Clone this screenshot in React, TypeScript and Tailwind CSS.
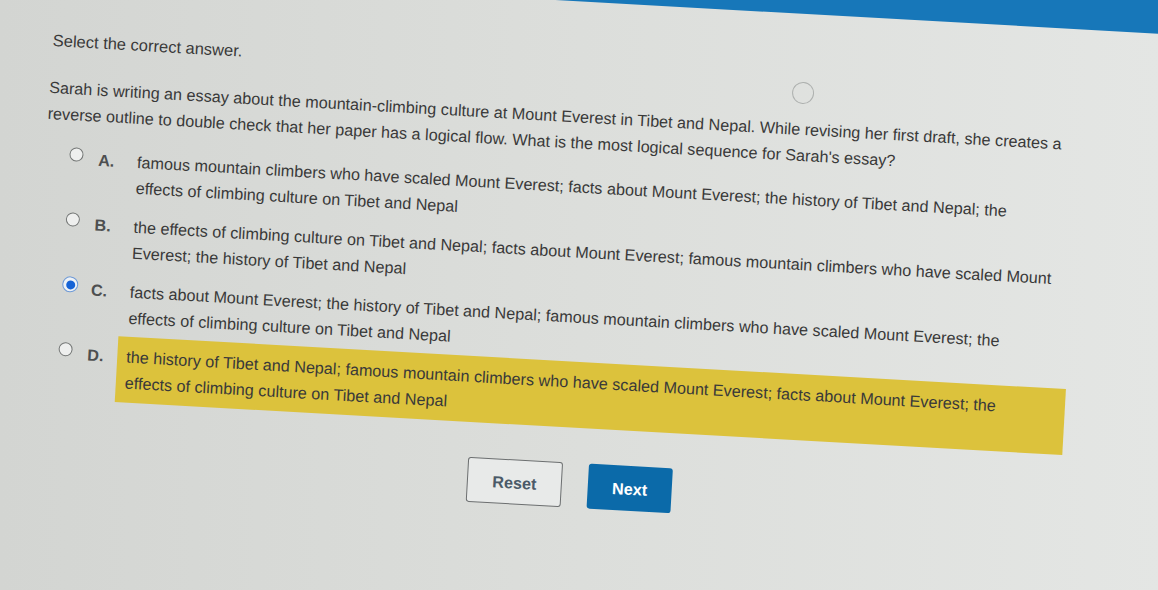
import type { ReactNode } from 'react';

type Option = {
  letter: string;
  lines: [string, string];
  selected?: boolean;
  highlight?: boolean;
};

const options: Option[] = [
  {
    letter: 'A.',
    lines: [
      'famous mountain climbers who have scaled Mount Everest; facts about Mount Everest; the history of Tibet and Nepal; the',
      'effects of climbing culture on Tibet and Nepal',
    ],
  },
  {
    letter: 'B.',
    lines: [
      'the effects of climbing culture on Tibet and Nepal; facts about Mount Everest; famous mountain climbers who have scaled Mount',
      'Everest; the history of Tibet and Nepal',
    ],
  },
  {
    letter: 'C.',
    lines: [
      'facts about Mount Everest; the history of Tibet and Nepal; famous mountain climbers who have scaled Mount Everest; the',
      'effects of climbing culture on Tibet and Nepal',
    ],
    selected: true,
  },
  {
    letter: 'D.',
    lines: [
      'the history of Tibet and Nepal; famous mountain climbers who have scaled Mount Everest; facts about Mount Everest; the',
      'effects of climbing culture on Tibet and Nepal',
    ],
    highlight: true,
  },
];

function Radio({ checked }: { checked?: boolean }) {
  if (checked) {
    return (
      <span className="mt-[1px] flex h-[16px] w-[16px] items-center justify-center rounded-full border-[1.5px] border-[#6f9ad6] bg-[#eef2f6]">
        <span className="h-[9px] w-[9px] rounded-full bg-[#1663d6]" />
      </span>
    );
  }
  return <span className="mt-[2px] h-[14px] w-[14px] rounded-full border-[1.5px] border-[#737675] bg-[#eeefee]" />;
}

function OptionRow({ opt }: { opt: Option }) {
  const body: ReactNode = (
    <>
      {opt.lines[0]}
      <br />
      {opt.lines[1]}
    </>
  );
  return (
    <div className="flex items-start pl-[78px]">
      <div className="flex w-[29px] justify-start">
        <Radio checked={opt.selected} />
      </div>
      <div className="w-[39px] font-bold text-[#4d4f50]">{opt.letter}</div>
      {opt.highlight ? (
        <div className="-ml-[9px] -mt-[7px] w-[949px] bg-[#dcc23c] pb-[7px] pl-[9px] pt-[7px]">{body}</div>
      ) : (
        <div>{body}</div>
      )}
    </div>
  );
}

export default function App() {
  return (
    <div className="relative h-[590px] w-[1158px] overflow-hidden bg-gradient-to-r from-[#d3d5d2] via-[#dcdedb] to-[#e4e6e4] font-['Liberation_Sans',Arial,sans-serif] text-[16.2px] leading-[26px] text-[#393939]">
      {/* the photo is tilted a little, so the whole page is turned to match */}
      <div className="-ml-[100px] -mt-[80px] h-[800px] w-[1400px] origin-[100px_80px] rotate-[3.2deg]">
        <div className="h-[49px] w-full bg-[#1777b9]" />
        <div className="relative pl-[100px] pt-[57px]">
          <div className="pl-[55px] text-[16.5px] leading-[22px]">Select the correct answer.</div>

          <span className="absolute left-[896px] top-[68px] h-[22px] w-[22px] rounded-full border border-[#aeb1af]" />

          <div className="mt-[23px] pl-[54px]">
            Sarah is writing an essay about the mountain-climbing culture at Mount Everest in Tibet and Nepal. While revising her first draft, she creates a
            <br />
            reverse outline to double check that her paper has a logical flow. What is the most logical sequence for Sarah&apos;s essay?
          </div>

          <div className="mt-[18px] flex flex-col gap-[13px]">
            {options.map((o) => (
              <OptionRow key={o.letter} opt={o} />
            ))}
          </div>

          <div className="mt-[35px] flex items-start gap-[26px] pl-[493px]">
            <button className="h-[45px] w-[95px] rounded-[3px] border-[1.5px] border-[#6c6f70] bg-[#e8eae9] font-bold text-[#4b5a68]">
              Reset
            </button>
            <button className="h-[45px] w-[84px] rounded-[3px] bg-[#0b6aa9] font-bold text-white">Next</button>
          </div>
        </div>
      </div>
    </div>
  );
}
